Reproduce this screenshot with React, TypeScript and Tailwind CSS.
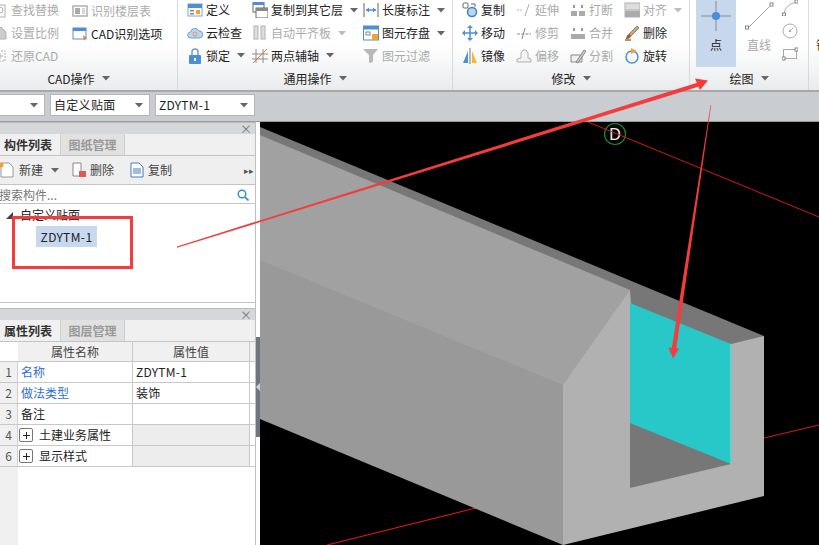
import React from "react";

const FONT = { fontFamily: '"Noto Sans CJK SC", "Liberation Sans", sans-serif' };

const Caret = ({ c = "#666" }: { c?: string }) => (
  <svg width="8" height="5" viewBox="0 0 8 5" className="shrink-0"><polygon points="0,0 8,0 4,4.5" fill={c} /></svg>
);

const I = ({ children, w = 16 }: { children: React.ReactNode; w?: number }) => (
  <svg width={w} height="16" viewBox="0 0 16 16" fill="none" className="shrink-0">{children}</svg>
);

const G = "#b0b0b0";
const B = "#4a8fd8";
const O = "#f5a030";

const icons: Record<string, React.ReactNode> = {
  find: <I><rect x="4" y="3" width="9" height="12" stroke={G} /><circle cx="8" cy="8" r="3" stroke={G} /></I>,
  scale: <I><path d="M4 14V7l5-5 5 5v7z" fill="#ccc" stroke={G} /></I>,
  restore: <I><path d="M3 3h10v10H3z" stroke={G} strokeDasharray="2 1" /><path d="M8 5v6M5 8h6" stroke={G} /></I>,
  floors: <I><rect x="1" y="3" width="14" height="10" stroke={G} strokeWidth="1.5" /><rect x="3" y="5" width="5" height="6" fill="#aaa" /><path d="M10 6h3M10 8h3M10 10h3" stroke={G} /></I>,
  cadopt: <I><rect x="1" y="2" width="13" height="11" fill="#fff" stroke="#5b8fc9" /><rect x="1" y="2" width="13" height="3" fill="#4a8fd8" /><path d="M11 9l4 3-2 .5-1 2.5z" fill="#e8743b" /></I>,
  define: <I><rect x="1" y="2" width="14" height="12" fill="#fff" stroke="#7aa7da" /><rect x="1" y="2" width="14" height="4" fill={B} /><rect x="3" y="8" width="4" height="1.5" fill="#888" /><rect x="3" y="11" width="4" height="1.5" fill="#888" /><rect x="9" y="8" width="4" height="4" fill={O} /></I>,
  cloud: <I><path d="M4 13a3 3 0 0 1-.5-6 4.5 4.5 0 0 1 8.5-1 3.5 3.5 0 0 1 .5 7z" fill="#bcd5ef" stroke="#6c9fd6" /><circle cx="8" cy="9" r="2" stroke="#e8965a" /></I>,
  lock: <I><rect x="2" y="7" width="12" height="9" rx="1" fill={B} /><path d="M5 7V4a3 3 0 0 1 6 0v3" stroke="#7a9cc4" strokeWidth="1.5" /><rect x="7" y="10" width="2" height="3" fill="#fff" /></I>,
  copyto: <I><rect x="1" y="0" width="11" height="10" fill="#fff" stroke="#666" /><rect x="1" y="0" width="11" height="3" fill={B} /><rect x="4" y="6" width="12" height="10" fill="#fff" stroke="#666" /><rect x="4" y="6" width="12" height="3" fill="#888" /></I>,
  align: <I><rect x="2" y="1" width="4" height="13" fill="#ddd" stroke={G} /><rect x="9" y="1" width="4" height="13" fill="#ddd" stroke={G} /></I>,
  axis: <I><path d="M4 1v14M11 1v14M0 6h16M0 11h16" stroke="#777" strokeWidth="0.8" /><path d="M1 15L15 1" stroke="#e8743b" /></I>,
  dim: <I><path d="M1 1v14M15 1v14" stroke="#666" /><path d="M3 8h10" stroke={B} strokeWidth="1.5" /><path d="M3 8l3-2.5v5zM13 8l-3-2.5v5z" fill={B} /></I>,
  save: <I><rect x="0.5" y="1" width="15" height="14" fill="#fff" stroke={B} /><rect x="0.5" y="1" width="15" height="3.5" fill={B} /><rect x="3" y="7" width="4" height="3" stroke="#888" /><rect x="9" y="9" width="6" height="6" fill={O} /></I>,
  filter: <I><path d="M0 1h15l-5 6v7l-4 1V7z" fill="#b8b8b8" /></I>,
  copy: <I><rect x="1" y="1" width="5" height="5" rx="1" stroke="#666" /><circle cx="10" cy="10" r="4.5" fill="#bcd5ef" stroke="#3f7fc4" strokeWidth="1.5" /><path d="M9 2h4v3" stroke="#666" /></I>,
  move: <I><path d="M8 1v14M1 8h14" stroke={B} strokeWidth="1.5" /><path d="M8 0l-3 3h6zM8 16l-3-3h6zM0 8l3-3v6zM16 8l-3-3v6z" fill={B} /></I>,
  mirror: <I><path d="M1 15L6 3v12z" fill={B} /><path d="M8 0v16" stroke="#777" /><path d="M10 3l5 12h-5z" fill="#f5b82e" /></I>,
  extend: <I><path d="M1 8h6" stroke={G} strokeDasharray="2 1.2" /><path d="M9 14L13 2" stroke={G} /></I>,
  trim: <I><path d="M1 9h14" stroke="#888" strokeDasharray="3 1.2" /><path d="M6 14L9 3" stroke="#888" /></I>,
  offset: <I><path d="M1 14v-3l4-1V5l2-3h3l2 3v5l3 1v3z" fill="#f2f2f2" stroke={G} /></I>,
  brk: <I><rect x="1" y="9" width="6" height="5" fill="#aaa" /><rect x="9" y="9" width="6" height="5" fill="#aaa" /><path d="M4 3v3M12 3v3" stroke="#999" strokeWidth="2" /></I>,
  merge: <I><rect x="1" y="9" width="14" height="5" fill="#aaa" /><path d="M4 3v3M12 3v3" stroke="#999" strokeWidth="2" /></I>,
  split: <I><path d="M1 7h11v7H1z" fill="#f0f0f0" stroke="#888" /><path d="M6 14l8-12 2 1-8 12z" fill="#ccc" stroke="#888" /></I>,
  alignr: <I><rect x="1" y="1" width="15" height="7" fill="#ddd" stroke={G} /><rect x="1" y="9" width="15" height="6" fill="#aaa" stroke={G} /></I>,
  del: <I><path d="M1 15h6" stroke="#333" /><path d="M5 9L13 1l2 2-8 8z" fill="#c9a878" stroke="#555" strokeWidth="0.6" /><path d="M2 14c0-3 2-5 3.5-5L7 11c0 2-3 3.5-5 3z" fill="#b5552a" /></I>,
  rotate: <I><circle cx="8" cy="9" r="6" stroke={B} strokeWidth="1.5" /><path d="M7 0l6 3-6 3z" fill={O} /></I>,
};

const Item = ({ icon, label, off, caret }: { icon: string; label: string; off?: boolean; caret?: boolean }) => (
  <div className={`h-[23px] flex items-center gap-[3px] whitespace-nowrap ${off ? "text-[#aaaaaa]" : "text-[#222222]"}`}>
    {icons[icon]}
    <span>{label}</span>
    {caret && <span className="ml-[4px]"><Caret c={off ? "#bbb" : "#666"} /></span>}
  </div>
);

const Col = ({ w, items }: { w: string; items: [string, string, boolean?, boolean?][] }) => (
  <div className={`flex flex-col -mt-[1px] shrink-0 ${w}`}>
    {items.map(([i, l, o, c]) => <Item key={l} icon={i} label={l} off={o} caret={c} />)}
  </div>
);

const GroupLabel = ({ text, cls = "" }: { text: string; cls?: string }) => (
  <div className={`h-[23px] flex items-center justify-center gap-[7px] text-[#222222] ${cls}`}>
    <span>{text}</span><Caret />
  </div>
);

const Ribbon = () => (
  <div className="h-[92px] shrink-0 flex overflow-hidden bg-gradient-to-b from-white from-[50%] to-[#e9ebed] border-b-2 border-[#a6a8aa]">
    <div className="w-[178px] shrink-0 flex flex-col border-r border-[#d8dadc]">
      <div className="h-[67px] flex -ml-[8px]">
        <Col w="w-[80px]" items={[["find", "查找替换", true], ["scale", "设置比例", true], ["restore", "还原CAD", true]]} />
        <Col w="w-[100px]" items={[["floors", "识别楼层表", true], ["cadopt", "CAD识别选项"]]} />
      </div>
      <GroupLabel text="CAD操作" cls="pr-[20px]" />
    </div>
    <div className="w-[275px] shrink-0 flex flex-col border-r border-[#d8dadc]">
      <div className="h-[67px] flex pl-[9px]">
        <Col w="w-[65px]" items={[["define", "定义"], ["cloud", "云检查"], ["lock", "锁定", false, true]]} />
        <Col w="w-[111px]" items={[["copyto", "复制到其它层", false, true], ["align", "自动平齐板", true, true], ["axis", "两点辅轴", false, true]]} />
        <Col w="w-[85px]" items={[["dim", "长度标注", false, true], ["save", "图元存盘", false, true], ["filter", "图元过滤", true]]} />
      </div>
      <GroupLabel text="通用操作" />
    </div>
    <div className="w-[237px] shrink-0 flex flex-col border-r border-[#d8dadc]">
      <div className="h-[67px] flex pl-[9px]">
        <Col w="w-[54px]" items={[["copy", "复制"], ["move", "移动"], ["mirror", "镜像"]]} />
        <Col w="w-[54px]" items={[["extend", "延伸", true], ["trim", "修剪", true], ["offset", "偏移", true]]} />
        <Col w="w-[54px]" items={[["brk", "打断", true], ["merge", "合并", true], ["split", "分割", true]]} />
        <Col w="w-[60px]" items={[["alignr", "对齐", true, true], ["del", "删除"], ["rotate", "旋转"]]} />
      </div>
      <GroupLabel text="修改" />
    </div>
    <div className="w-[119px] shrink-0 flex flex-col border-r border-[#d8dadc]">
      <div className="h-[67px] flex pl-[6px]">
        <div className="w-[40px] h-[67px] bg-[#c7d8ee] flex flex-col items-center shrink-0 text-[#222222]">
          <svg width="30" height="30" viewBox="0 0 30 30" className="mt-[1px]"><path d="M15 0v30M0 15h30" stroke="#888" /><circle cx="15" cy="15" r="4" fill="#4a8fd8" /></svg>
          <span className="mt-[8px]">点</span>
        </div>
        <div className="w-[46px] flex flex-col items-center text-[#aaaaaa] shrink-0">
          <svg width="30" height="30" viewBox="0 0 30 30" className="mt-[1px]"><path d="M4 27L27 4" stroke="#aaa" /><rect x="1.5" y="25" width="3" height="3" fill="#fff" stroke="#888" /><rect x="26" y="2" width="3" height="3" fill="#fff" stroke="#888" /></svg>
          <span className="mt-[8px]">直线</span>
        </div>
        <div className="flex flex-col gap-[7px]">
          <svg width="16" height="16" viewBox="0 0 16 16"><path d="M2 15C2 8 8 3 15 2" stroke="#aaa" fill="none" /><rect x="13" y="0" width="3" height="3" fill="#fff" stroke="#888" /><rect x="0.5" y="13" width="3" height="3" fill="#fff" stroke="#888" /></svg>
          <svg width="16" height="16" viewBox="0 0 16 16"><circle cx="8" cy="8" r="7" stroke="#aaa" fill="none" /><circle cx="8" cy="8" r="1" fill="#888" /><path d="M8 8l3-3" stroke="#aaa" /></svg>
          <svg width="16" height="16" viewBox="0 0 16 16"><rect x="1.5" y="3.5" width="13" height="9" stroke="#aaa" fill="none" /><rect x="0" y="11" width="3" height="3" fill="#fff" stroke="#888" /><rect x="13" y="2" width="3" height="3" fill="#fff" stroke="#888" /></svg>
        </div>
      </div>
      <GroupLabel text="绘图" />
    </div>
    <div className="pl-[7px] pt-[39px] text-[#222222] whitespace-nowrap">钢筋</div>
  </div>
);

const Select = ({ w, text }: { w: string; text?: string }) => (
  <div className={`h-[22px] ${w} bg-white border border-[#b4b6b8] flex items-center justify-between pl-[3px] pr-[6px] text-[#222222] shrink-0 tracking-[0.3px]`}>
    <span>{text}</span><Caret />
  </div>
);

const SubBar = () => (
  <div className="h-[30px] shrink-0 bg-[#c9ccd0] flex items-center gap-[5px] -ml-[10px] pb-[3px] border-b border-[#9a9da0]">
    <Select w="w-[55px]" />
    <Select w="w-[100px]" text="自定义贴面" />
    <Select w="w-[100px]" text="ZDYTM-1" />
  </div>
);

const TitleBar = () => (
  <div className="h-[12px] bg-[#d5d7da] flex items-center justify-end pr-[3px] text-[#777777] text-[12px] leading-none border-t border-[#b8babc]">×</div>
);

const Tabs = ({ a, b }: { a: string; b: string }) => (
  <div className="h-[22px] flex bg-[#f0f0f0] border-b border-[#c4c4c4]">
    <div className="w-[60px] pl-[4px] flex items-center font-bold text-[#333333] whitespace-nowrap">{a}</div>
    <div className="w-[65px] bg-[#e1e1e1] border-x border-[#d0d0d0] flex items-center justify-center text-[#999999] font-bold">{b}</div>
  </div>
);

const Row = ({ n, name, value, blue, expand }: { n: string; name: string; value?: string; blue?: boolean; expand?: boolean }) => (
  <div className="grid grid-cols-[18px_115px_117px_5px] h-[21px] border-b border-[#c8c8c8]">
    <div className="bg-[#f0f0f0] flex items-center justify-center text-[#555555] border-r border-[#d0d0d0]">{n}</div>
    <div className={`flex items-center border-r border-[#c8c8c8] bg-white ${expand ? "pl-[1px] gap-[6px]" : "pl-[3px]"} ${blue ? "text-[#2f6fd8]" : "text-[#222222]"}`}>
      {expand && <span className="w-[14px] h-[14px] border border-[#777777] rounded-[2px] bg-white flex items-center justify-center"><svg width="7" height="7" viewBox="0 0 7 7"><path d="M3.5 0v7M0 3.5h7" stroke="#222" /></svg></span>}
      <span className="whitespace-nowrap">{name}</span>
    </div>
    <div className={`flex items-center pl-[3px] border-r border-[#c8c8c8] text-[#222222] tracking-[0.3px] ${expand ? "bg-[#ededed]" : "bg-white"}`}>{value}</div>
    <div className="bg-white" />
  </div>
);

const LeftPanel = () => (
  <div className="w-[256px] shrink-0 flex flex-col border-r border-[#c0c0c0] bg-white">
    <TitleBar />
    <Tabs a="构件列表" b="图纸管理" />
    <div className="h-[29px] bg-[#efefef] border-b border-[#c4c4c4] flex items-center text-[#444444]">
      <div className="flex items-center -ml-[1px] gap-[5px]">
        <svg width="15" height="16" viewBox="0 0 15 16"><path d="M2 1h8l4 4v10H2z" fill="#fff" stroke="#999" /><circle cx="2" cy="3" r="2.5" fill="#f5a030" /></svg>
        <span>新建</span><span className="ml-[3px]"><Caret /></span>
      </div>
      <div className="flex items-center ml-[12px] gap-[4px]">
        <svg width="15" height="16" viewBox="0 0 15 16"><path d="M2 1h8v13H2z" fill="#fff" stroke="#888" /><rect x="8" y="9" width="7" height="6" fill="#e05a5a" /></svg>
        <span>删除</span>
      </div>
      <div className="flex items-center ml-[16px] gap-[4px]">
        <svg width="14" height="16" viewBox="0 0 14 16"><path d="M1 1h8l4 4v10H1z" fill="#fff" stroke="#3f7fc4" /><path d="M3 7h8M3 9h8M3 11h8" stroke="#3f7fc4" /></svg>
        <span>复制</span>
      </div>
      <span className="ml-auto mr-[1px] text-[#555555] text-[9px]">▸▸</span>
    </div>
    <div className="h-[19px] flex items-center justify-between border-b border-[#c4c4c4] text-[#777777] pr-[6px] pt-[2px]">
      <span className="-ml-[1px]">搜索构件...</span>
      <svg width="12" height="12" viewBox="0 0 12 12" fill="none"><circle cx="5" cy="5" r="3.8" stroke="#2f8fc4" strokeWidth="1.4" /><path d="M8 8l3.5 3.5" stroke="#2f8fc4" strokeWidth="1.6" /></svg>
    </div>
    <div className="h-[99px] flex flex-col text-[#222222] border-b border-[#c4c4c4]">
      <div className="h-[22px] flex items-center pl-[6px] gap-[7px]">
        <svg width="7" height="7" viewBox="0 0 7 7"><polygon points="7,0 7,7 0,7" fill="#444" /></svg>
        <span>自定义贴面</span>
      </div>
      <div className="pl-[36px]"><span className="inline-block h-[21px] w-[61px] leading-[21px] text-center bg-[#c8d8ee] tracking-[0.4px]">ZDYTM-1</span></div>
    </div>
    <div className="h-[5px] bg-white" />
    <TitleBar />
    <Tabs a="属性列表" b="图层管理" />
    <div className="grid grid-cols-[18px_115px_117px_5px] h-[20px] border-b border-[#c8c8c8] text-[#444444]">
      <div className="bg-white" />
      <div className="bg-[#f0f0f0] border-r border-[#c8c8c8] flex items-center justify-center">属性名称</div>
      <div className="bg-[#f0f0f0] border-r border-[#c8c8c8] flex items-center justify-center">属性值</div>
      <div className="bg-[#f0f0f0]" />
    </div>
    <Row n="1" name="名称" value="ZDYTM-1" blue />
    <Row n="2" name="做法类型" value="装饰" blue />
    <Row n="3" name="备注" />
    <Row n="4" name="土建业务属性" expand />
    <Row n="6" name="显示样式" expand />
    <div className="flex-1 flex"><div className="w-[18px] bg-[#f0f0f0]" /></div>
  </div>
);

const Splitter = () => (
  <div className="w-[4px] shrink-0 bg-white pt-[215px]">
    <div className="h-[100px] bg-[#6b7680] flex items-center justify-center">
      <svg width="4" height="8" viewBox="0 0 4 8"><polygon points="4,0 4,8 0,4" fill="#cfd3d8" /></svg>
    </div>
  </div>
);

const Canvas = () => (
  <svg viewBox="260 122 559 423" className="flex-1 h-full bg-black block" preserveAspectRatio="none">
    <path d="M764 438L819 425" stroke="#d01818" strokeWidth="1.2" />
    <path d="M327 545L476 508" stroke="#d01818" strokeWidth="1.2" />
    <polygon points="260,127 764,336 764,480 630,500 260,300" fill="#777777" />
    <polygon points="260,200 563,300 600,400 563,545 260,419" fill="#999999" />
    <polygon points="260,135 630,290 640,400 563,385 260,260" fill="#a1a1a1" />
    <polygon points="630,303 731,344 731,464 630,423" fill="#28c8c8" />
    <path d="M730.5 344V464" stroke="#30e4e4" strokeWidth="1" />
    <polygon points="630,290 563,385 563,545 764,496 764,336 731,344 731,464 630,488" fill="#b1b1b1" />
    <circle cx="615" cy="134" r="10.5" fill="#000" stroke="#1a8a2a" strokeWidth="1.2" />
    <text x="615" y="140" textAnchor="middle" fontSize="16" fill="#f0f0f0" fontFamily="Liberation Sans, sans-serif">D</text>
    <path d="M588 122L819 217" stroke="#d01818" strokeWidth="1" />
  </svg>
);

const Overlay = () => (
  <svg viewBox="0 0 819 545" className="absolute inset-0 w-full h-full pointer-events-none">
    <rect x="13.5" y="217.5" width="118" height="50" fill="none" stroke="#f43c3c" strokeWidth="3" />
    <polygon points="177,246.4 177,247.8 699,86.5 698,82.5" fill="#f43c3c" />
    <polygon points="708,80.5 695,78.5 700,90" fill="#f43c3c" />
    <polygon points="710.6,105 711.2,105 676,350 671.5,350" fill="#f43c3c" />
    <polygon points="673,358.5 668.5,347.5 679,348.5" fill="#f43c3c" />
  </svg>
);

export default function App() {
  return (
    <div className="relative w-[819px] h-[545px] overflow-hidden flex flex-col bg-white text-[12px] leading-none" style={FONT}>
      <Ribbon />
      <SubBar />
      <div className="flex-1 flex min-h-0">
        <LeftPanel />
        <Splitter />
        <Canvas />
      </div>
      <Overlay />
    </div>
  );
}
